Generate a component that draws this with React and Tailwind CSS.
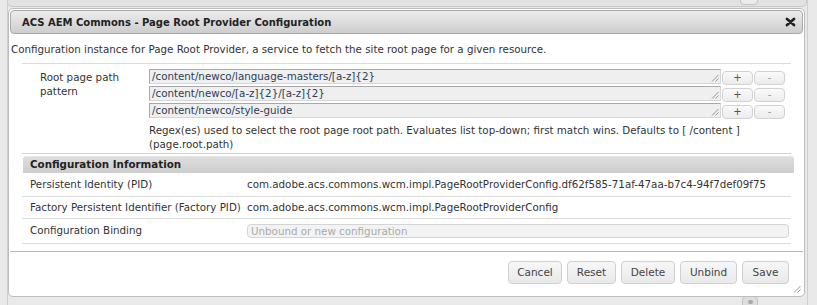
import React from 'react';

const Grip = ({ className = '' }) => (
  <svg width="8" height="8" viewBox="0 0 8 8" className={className}>
    <line x1="1" y1="7.5" x2="7.5" y2="1" stroke="#8a8a8a" strokeWidth="0.9" />
    <line x1="4.5" y1="7.5" x2="7.5" y2="4.5" stroke="#8a8a8a" strokeWidth="0.9" />
  </svg>
);

const SmallButton = ({ children, dim }) => (
  <button
    className={`h-[14px] w-[31px] rounded-[4px] border border-[#d2d2d2] bg-gradient-to-b from-[#fafafa] to-[#ececec] text-[10px] leading-[12px] ${dim ? 'text-[#999]' : 'text-[#555]'}`}
  >
    {children}
  </button>
);

const PatternRow = ({ value }) => (
  <div className="flex items-center h-[17px]">
    <div className="relative w-[572px] h-[15px] border border-[#a8a8a8] border-b-[#d6d6d6] border-r-[#d6d6d6] bg-[#efefef] pl-[2px] leading-[13px] text-[#2d3d57]">
      {value}
      <Grip className="absolute right-[1px] bottom-[1px]" />
    </div>
    <div className="flex gap-[1px] ml-[1px] mt-[2px]">
      <SmallButton>+</SmallButton>
      <SmallButton dim>-</SmallButton>
    </div>
  </div>
);

const FooterButton = ({ label, w }) => (
  <button
    className={`h-[23px] ${w} rounded-[4px] border border-[#d0d0d0] bg-gradient-to-b from-[#f7f7f7] to-[#e9e9e9] text-[10.5px] text-[#444]`}
  >
    {label}
  </button>
);

const InfoRow = ({ label, children, h }) => (
  <div className={`flex items-center ${h} border-b border-[#dcdcdc]`}>
    <div className="w-[225px] pl-[8px] text-[#333]">{label}</div>
    <div className="flex-1 text-[#333]">{children}</div>
  </div>
);

export default function App() {
  return (
    <div className="relative w-[817px] h-[305px] overflow-hidden bg-[#e9e9e9] font-['DejaVu_Sans',sans-serif] text-[10.3px]">
      {/* page behind the dialog */}
      <div className="absolute left-[7px] top-[-20px] w-[800px] h-[27px] rounded-[5px] border border-[#c9c9c9] bg-[#e2e2e2]" />
      <div className="absolute left-[7px] top-0 w-[801px] h-[305px] border-x border-[#cfcfcf]" />
      <div className="absolute left-[740px] top-[-8px] w-[18px] h-[13px] rounded-[4px] border border-[#c4c4c4] bg-[#ececec]" />
      <div className="absolute left-[742px] top-[296px] w-[16px] h-[14px] rounded-[4px] border border-[#c4c4c4] bg-[#dedede] flex justify-center pt-[3px]">
        <div className="w-[5px] h-[4px] rounded-full bg-[#a8a8a8]" />
      </div>

      {/* dialog */}
      <div className="absolute left-[8px] top-[8px] w-[797px] h-[289px] rounded-[5px] border border-[#bdbdbd] bg-white p-[1px] flex flex-col">
        <div className="h-[24px] flex items-center justify-between rounded-[4px] border border-[#aaaaaa] bg-gradient-to-b from-[#ededed] to-[#cdcdcd] pl-[11px] pr-[6px]">
          <span className="font-bold text-[10px] text-[#222]">ACS AEM Commons - Page Root Provider Configuration</span>
          <svg width="11" height="10" viewBox="0 0 11 10">
            <path d="M2 2 L9 8 M9 2 L2 8" stroke="#222" strokeWidth="2.8" strokeLinecap="round" />
          </svg>
        </div>

        <div className="pl-[1px] pt-[8px] h-[21px] text-[#333] leading-[14px]">
          Configuration instance for Page Root Provider, a service to fetch the site root page for a given resource.
        </div>

        <div className="mx-[12px] mt-[8px] border-t border-[#dcdcdc]">
          <div className="flex pt-[4px] h-[89px]">
            <div className="w-[127px] pl-[18px] pt-[2px] leading-[14px] text-[#333]">
              Root page path
              <br />
              pattern
            </div>
            <div className="flex flex-col">
              <PatternRow value="/content/newco/language-masters/[a-z]{2}" />
              <PatternRow value="/content/newco/[a-z]{2}/[a-z]{2}" />
              <PatternRow value="/content/newco/style-guide" />
              <div className="mt-[4px] leading-[14px] text-[#333] w-[630px]">
                Regex(es) used to select the root page root path. Evaluates list top-down; first match wins. Defaults to [ /content ] (page.root.path)
              </div>
            </div>
          </div>

          <div className="border-t border-[#d4d4d4] pt-[2px]">
            <div className="h-[17px] ml-[1px] mr-[-3px] flex items-center rounded-t-[3px] border-t border-[#e6e6e6] bg-gradient-to-b from-[#dedede] to-[#cdcdcd] pl-[7px] font-bold text-[#222]">
              Configuration Information
            </div>
            <InfoRow label="Persistent Identity (PID)" h="h-[24px]">
              com.adobe.acs.commons.wcm.impl.PageRootProviderConfig.df62f585-71af-47aa-b7c4-94f7def09f75
            </InfoRow>
            <InfoRow label="Factory Persistent Identifier (Factory PID)" h="h-[22px]">
              com.adobe.acs.commons.wcm.impl.PageRootProviderConfig
            </InfoRow>
            <InfoRow label="Configuration Binding" h="h-[25px]">
              <div className="w-[542px] h-[14px] rounded-[4px] border border-[#d4d4d4] bg-[#f3f3f3] pl-[3px] leading-[12px] text-[#aaa]">
                Unbound or new configuration
              </div>
            </InfoRow>
          </div>
        </div>

        <div className="mt-auto relative h-[44px] border-t border-[#b5b5b5] flex items-start justify-end gap-[5px] pr-[14px] pt-[9px]">
          <FooterButton label="Cancel" w="w-[54px]" />
          <FooterButton label="Reset" w="w-[49px]" />
          <FooterButton label="Delete" w="w-[54px]" />
          <FooterButton label="Unbind" w="w-[57px]" />
          <FooterButton label="Save" w="w-[47px]" />
          <Grip className="absolute right-[2px] bottom-[2px]" />
        </div>
      </div>
    </div>
  );
}
